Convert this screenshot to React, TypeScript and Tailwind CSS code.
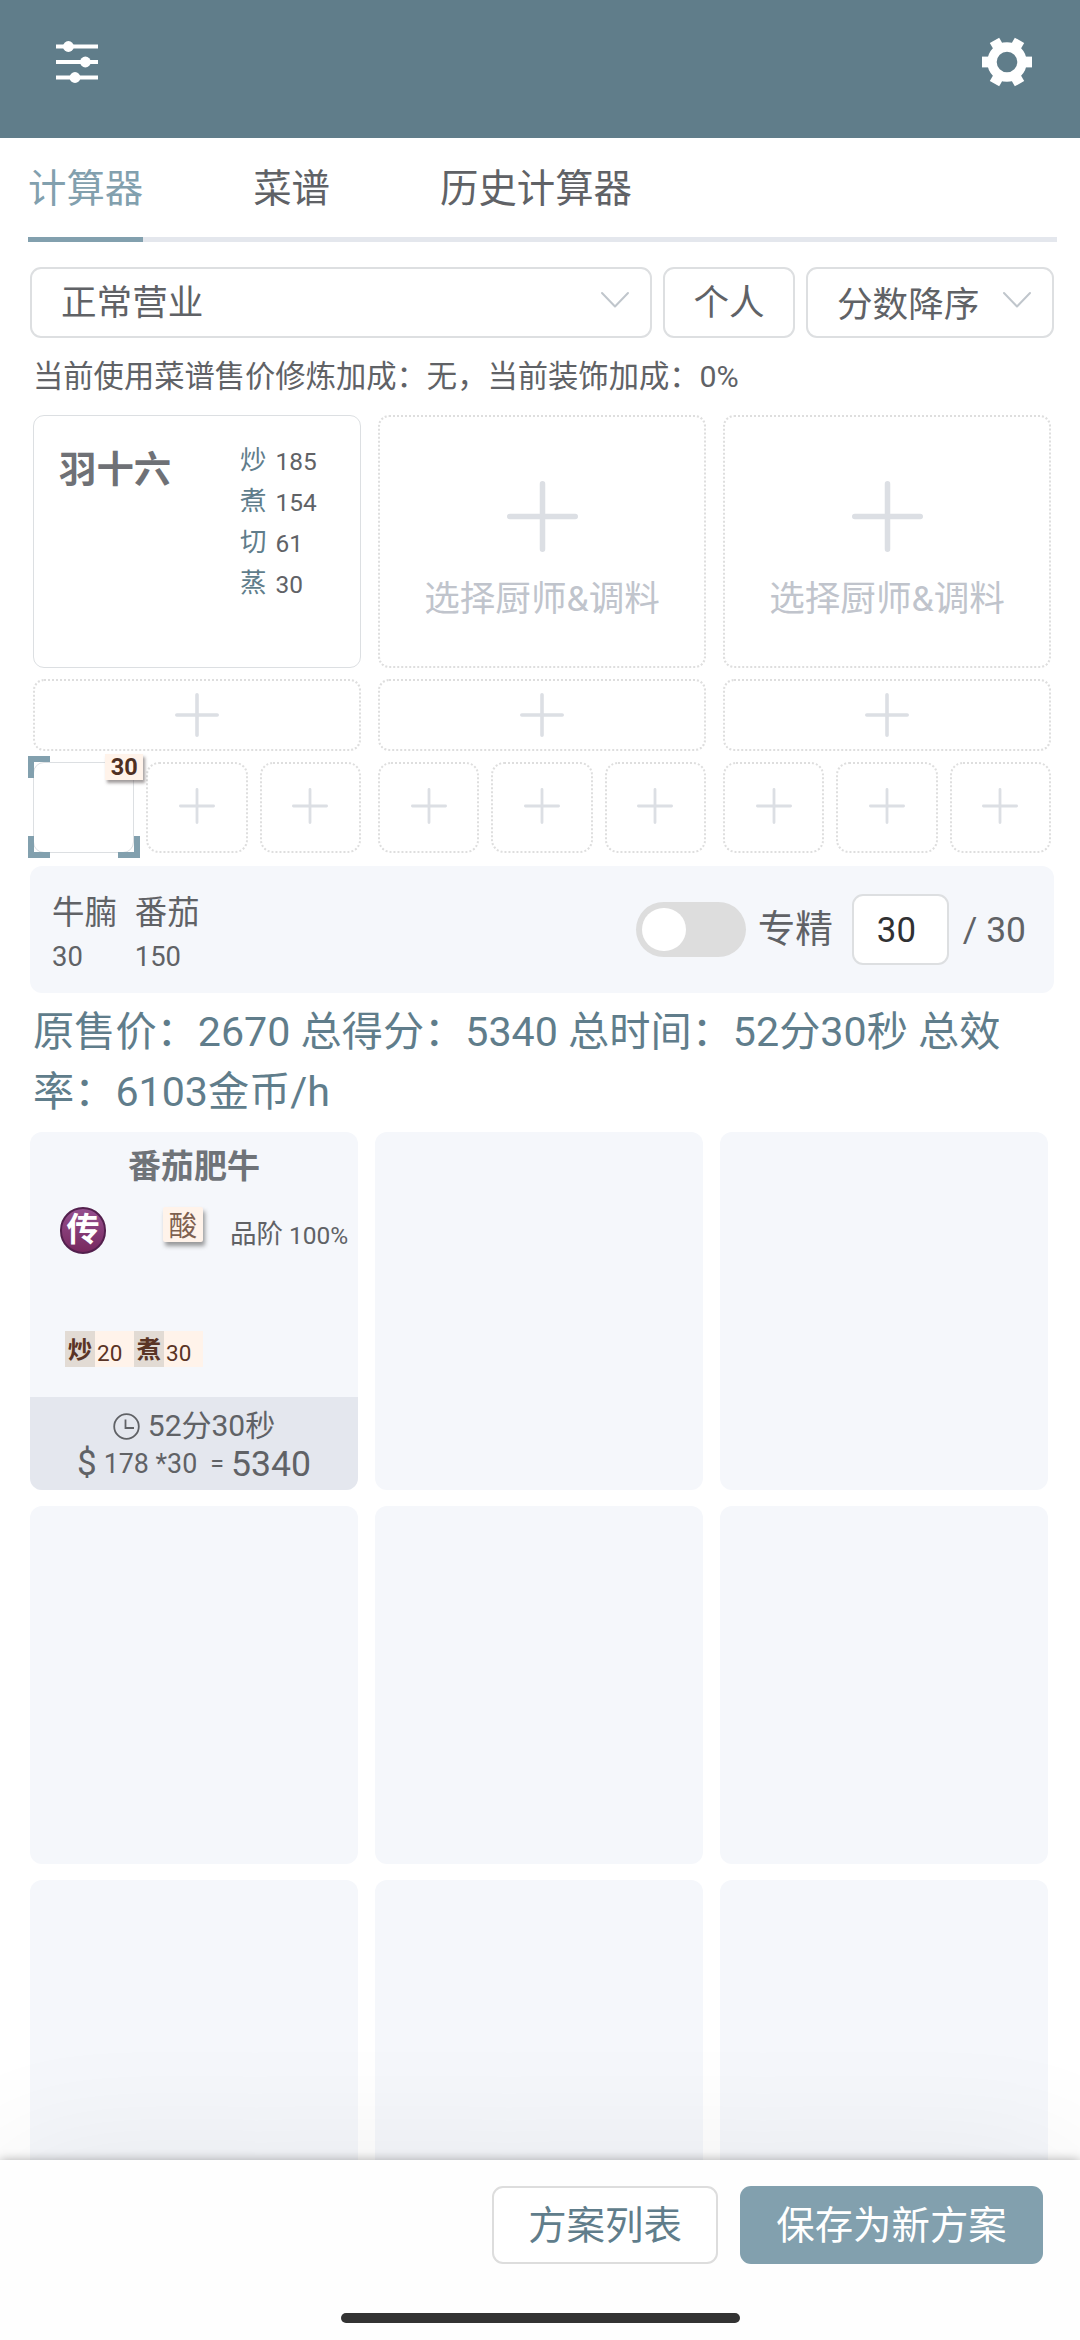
import React from 'react';

const TABS = ['计算器', '菜谱', '历史计算器'];

const SKILLS = [
    { name: '炒', value: 185 },
    { name: '煮', value: 154 },
    { name: '切', value: 61 },
    { name: '蒸', value: 30 },
];

const MATERIALS = [
    { name: '牛腩', count: 30 },
    { name: '番茄', count: 150 },
];

const RECIPE_SKILLS = [
    { name: '炒', value: 20 },
    { name: '煮', value: 30 },
];

function Plus({ size, stroke }: { size: number; stroke: number }) {
    return (
        <svg width={size} height={size} viewBox={`0 0 ${size} ${size}`} className="block shrink-0">
            <path
                d={`M${size / 2} ${stroke / 2}V${size - stroke / 2}M${stroke / 2} ${size / 2}H${size - stroke / 2}`}
                stroke="#dcdfe4"
                strokeWidth={stroke}
                strokeLinecap="round"
            />
        </svg>
    );
}

function Chevron() {
    return (
        <svg width="30" height="18" viewBox="0 0 30 18" className="block shrink-0">
            <path d="M2 2L15 15.5L28 2" fill="none" stroke="#c0c6cc" strokeWidth="2" strokeLinecap="round" strokeLinejoin="round" />
        </svg>
    );
}

function SlidersIcon() {
    return (
        <svg width="42" height="44" viewBox="0 0 42 44" fill="#fff" className="block">
            <rect x="0" y="4.5" width="42" height="4" />
            <rect x="0" y="20" width="42" height="4" />
            <rect x="0" y="35.5" width="42" height="4" />
            <circle cx="12.4" cy="6.5" r="5.4" />
            <circle cx="29.4" cy="22" r="5.4" />
            <circle cx="19" cy="37.5" r="5.4" />
        </svg>
    );
}

function GearIcon() {
    return (
        <svg width="50" height="50" viewBox="-25 -25 50 50" className="block">
            <circle r="15" fill="none" stroke="#fff" strokeWidth="9.4" />
            {[0, 60, 120].map((deg) => (
                <g key={deg} transform={`rotate(${deg})`} fill="#fff">
                    <rect x="-25" y="-5.4" width="9" height="10.8" />
                    <rect x="16" y="-5.4" width="9" height="10.8" />
                </g>
            ))}
        </svg>
    );
}

function Header() {
    return (
        <header className="flex h-[138px] items-start justify-between bg-[#607d8a] pt-[37px] pr-[48px] pl-[56px]">
            <div className="pt-[3px]">
                <SlidersIcon />
            </div>
            <GearIcon />
        </header>
    );
}

function Tabs() {
    return (
        <nav className="mr-[23px] ml-[28px] flex h-[104px] gap-[110px] border-b-[5px] border-[#e4e7ed] text-[38.4px] text-[#606266]">
            {TABS.map((tab, i) => (
                <div
                    key={tab}
                    className={
                        i === 0
                            ? '-mb-[5px] border-b-[5px] border-[#82a0ae] leading-[102px] text-[#82a0ae]'
                            : 'leading-[102px]'
                    }
                >
                    {tab}
                </div>
            ))}
        </nav>
    );
}

function Filters() {
    return (
        <div className="mt-[25px] mr-[26px] ml-[30px] flex h-[71px] text-[35.6px] leading-[68px] text-[#606266]">
            <div className="flex w-[622px] justify-between rounded-[11px] border-2 border-[#dddfe1] pr-[20px] pl-[29px]">
                <span>正常营业</span>
                <div className="pt-[22px]">
                    <Chevron />
                </div>
            </div>
            <div className="ml-[11px] w-[132px] rounded-[11px] border-2 border-[#dddfe1] text-center">个人</div>
            <div className="ml-[11px] flex flex-1 justify-between rounded-[11px] border-2 border-[#dddfe1] pr-[20px] pl-[29px]">
                <span className="pt-[2px]">分数降序</span>
                <div className="pt-[22px]">
                    <Chevron />
                </div>
            </div>
        </div>
    );
}

function ChefCard() {
    return (
        <div className="flex h-[253px] rounded-[11px] border border-[#dcdfe2] pl-[25px]">
            <div className="w-[181px] pt-[30px] text-[37.4px] leading-[48px] font-bold text-[#6f7176]">羽十六</div>
            <div className="pt-[23px]">
                {SKILLS.map((skill) => (
                    <div key={skill.name} className="flex h-[41px] gap-[9px]">
                        <span className="text-[26.5px] leading-[41px] text-[#607d8b]">{skill.name}</span>
                        <span className="text-[24.4px] leading-[46px] text-[#606266]">{skill.value}</span>
                    </div>
                ))}
            </div>
        </div>
    );
}

function EmptyChefCard() {
    return (
        <div className="flex h-[253px] flex-col items-center rounded-[11px] border-2 border-dotted border-[#dedede] pt-[64px]">
            <Plus size={71} stroke={5.5} />
            <div className="mt-[21px] text-[35.6px] leading-[52px] text-[#c0c4cc]">选择厨师&amp;调料</div>
        </div>
    );
}

function SelectedSlot() {
    return (
        <div className="relative h-[91px] rounded-[11px] border border-[#dcdfe2]">
            {/* selection corners */}
            <div className="absolute -top-[7px] -left-[6px] h-[22px] w-[22px] border-t-[6px] border-l-[6px] border-[#82a0ae]" />
            <div className="absolute -bottom-[6px] -left-[6px] h-[22px] w-[22px] border-b-[6px] border-l-[6px] border-[#82a0ae]" />
            <div className="absolute -right-[7px] -bottom-[6px] h-[22px] w-[22px] border-r-[6px] border-b-[6px] border-[#82a0ae]" />
            <div className="absolute -top-[9px] -right-[10px] h-[26px] w-[38px] bg-[#fff3ea] text-center text-[23.5px] leading-[26px] font-bold text-[#4e2f22] shadow-[2px_3px_3px_rgba(70,60,60,0.5)]">
                30
            </div>
        </div>
    );
}

function ChefColumn({ active }: { active: boolean }) {
    return (
        <div className="flex flex-col gap-[11px]">
            {active ? <ChefCard /> : <EmptyChefCard />}
            <div className="flex h-[72px] items-center justify-center rounded-[11px] border-2 border-dotted border-[#dedede] pb-px">
                <Plus size={44} stroke={3.6} />
            </div>
            <div className="grid grid-cols-3 gap-[12px]">
                {[0, 1, 2].map((i) =>
                    active && i === 0 ? (
                        <SelectedSlot key={i} />
                    ) : (
                        <div key={i} className="flex h-[91px] items-center justify-center rounded-[13px] border-2 border-dotted border-[#dedede] pb-[3px]">
                            <Plus size={36} stroke={2.8} />
                        </div>
                    )
                )}
            </div>
        </div>
    );
}

function MaterialPanel() {
    return (
        <div className="mt-[13px] mr-[26px] ml-[30px] flex h-[127px] rounded-[12px] bg-[#f5f7fb] pr-[28px] pl-[22px] text-[#606266]">
            {MATERIALS.map((item) => (
                <div key={item.name} className="mr-[18px] pt-[25px]">
                    <div className="text-[32.4px] leading-[44px]">{item.name}</div>
                    <div className="text-[27.4px] leading-[44px]">{item.count}</div>
                </div>
            ))}
            <div className="ml-auto flex items-center">
                <div className="h-[55px] w-[110px] rounded-full bg-[#dddddd] p-[6px]">
                    <div className="h-[43px] w-[44px] rounded-full bg-white" />
                </div>
                <span className="ml-[12px] pb-[2px] text-[37.6px] leading-[56px]">专精</span>
                <div className="ml-[19px] h-[71px] w-[97px] rounded-[11px] border-2 border-[#dddfe1] bg-white pl-[23px] text-[34.8px] leading-[68px] text-[#303133]">
                    30
                </div>
                <span className="ml-[14px] text-[35.4px] leading-[56px]">/ 30</span>
            </div>
        </div>
    );
}

function RecipeCard() {
    return (
        <div className="flex h-[358px] flex-col overflow-hidden rounded-[12px] bg-[#f5f7fb] text-[#606266]">
            <div className="pt-[10px] text-center text-[33px] leading-[50px] font-bold text-[#6f7378]">番茄肥牛</div>
            <div className="mt-[15px] flex h-[47px] pl-[30px]">
                <div className="h-[47px] w-[46px] rounded-full border-2 border-[#53204d] bg-linear-to-b from-[#95508f] to-[#77285f] text-center text-[33px] leading-[41px] font-bold text-white">
                    <span>传</span>
                </div>
                <div className="ml-[57px] h-[35px] w-[40px] rounded-[2px] bg-[#fff3ea] text-center text-[28.4px] leading-[39px] text-[#7d604f] shadow-[2px_4px_4px_rgba(90,90,90,0.6)]">
                    酸
                </div>
                <span className="ml-[27px] text-[26.5px] leading-[53px]">品阶</span>
                <span className="ml-[6px] text-[24.5px] leading-[58px]">100%</span>
            </div>
            <div className="mt-[77px] flex h-[36px] pl-[35px] text-[#5a3425]">
                {RECIPE_SKILLS.map((skill) => (
                    <div key={skill.name} className="flex h-[36px] w-[69px] bg-[#fff3ea]">
                        <span className="w-[30px] bg-[#e2dbd4] text-center text-[24.4px] leading-[38px] font-bold">{skill.name}</span>
                        <span className="pl-[2px] text-[22.5px] leading-[44px]">{skill.value}</span>
                    </div>
                ))}
            </div>
            <div className="mt-auto h-[93px] bg-[#e4e7ee] pt-[10px]">
                <div className="flex h-[38px] items-center justify-center gap-[8px]">
                    <svg width="27" height="27" viewBox="0 0 27 27" fill="none" stroke="#606266" strokeWidth="1.8" className="block">
                        <circle cx="13.5" cy="13.5" r="12.3" />
                        <path d="M12.5 6.5V15H21" />
                    </svg>
                    <span className="text-[30px] leading-[38px]">52分30秒</span>
                </div>
                <div className="flex h-[38px] justify-center text-[26.8px] leading-[38px]">
                    <span className="text-[35px]">$</span>
                    <span className="ml-[7px] whitespace-pre">178 *30</span>
                    <span className="ml-[13px] text-[25px]">=</span>
                    <span className="ml-[7px] text-[35.6px]">5340</span>
                </div>
            </div>
        </div>
    );
}

function BottomBar() {
    return (
        <footer className="relative h-[180px] bg-[#fefefe] shadow-[0_0_10px_rgba(0,0,0,0.3),0_0_140px_rgba(0,0,0,0.07)]">
            <div className="flex justify-end gap-[22px] pt-[26px] pr-[37px] text-[38.4px] leading-[76px]">
                <div className="h-[78px] w-[226px] rounded-[11px] border-2 border-[#dddddd] bg-white text-center text-[#607d8b]">方案列表</div>
                <div className="h-[78px] w-[303px] rounded-[11px] bg-[#82a0ae] pt-[2px] text-center text-white">保存为新方案</div>
            </div>
            <div className="mx-auto mt-[49px] h-[10px] w-[399px] rounded-full bg-[#333333]" />
        </footer>
    );
}

export default function App() {
    return (
        <div className="flex h-[2340px] w-[1080px] flex-col overflow-hidden bg-white font-[Roboto,'Noto_Sans_CJK_SC',sans-serif]">
            <Header />
            <main className="min-h-0 flex-1 overflow-hidden">
                <Tabs />
                <Filters />
                <p className="mt-[14px] ml-[33px] h-[50px] text-[30.3px] leading-[50px] whitespace-nowrap text-[#606266]">
                    当前使用菜谱售价修炼加成：无，当前装饰加成：0%
                </p>
                <div className="mt-[13px] mr-[29px] ml-[33px] grid grid-cols-3 gap-[17px]">
                    <ChefColumn active />
                    <ChefColumn active={false} />
                    <ChefColumn active={false} />
                </div>
                <MaterialPanel />
                <p className="mt-[9px] ml-[33px] w-[1000px] text-[41.2px] leading-[60px] text-[#607d8b]">
                    原售价：2670 总得分：5340 总时间：52分30秒 总效率：6103金币/h
                </p>
                <div className="mt-[10px] mr-[32px] ml-[30px] grid grid-cols-3 gap-x-[17px] gap-y-[16px]">
                    <RecipeCard />
                    {Array.from({ length: 8 }, (_, i) => (
                        <div key={i} className="h-[358px] rounded-[12px] bg-[#f5f7fb]" />
                    ))}
                </div>
            </main>
            <BottomBar />
        </div>
    );
}
